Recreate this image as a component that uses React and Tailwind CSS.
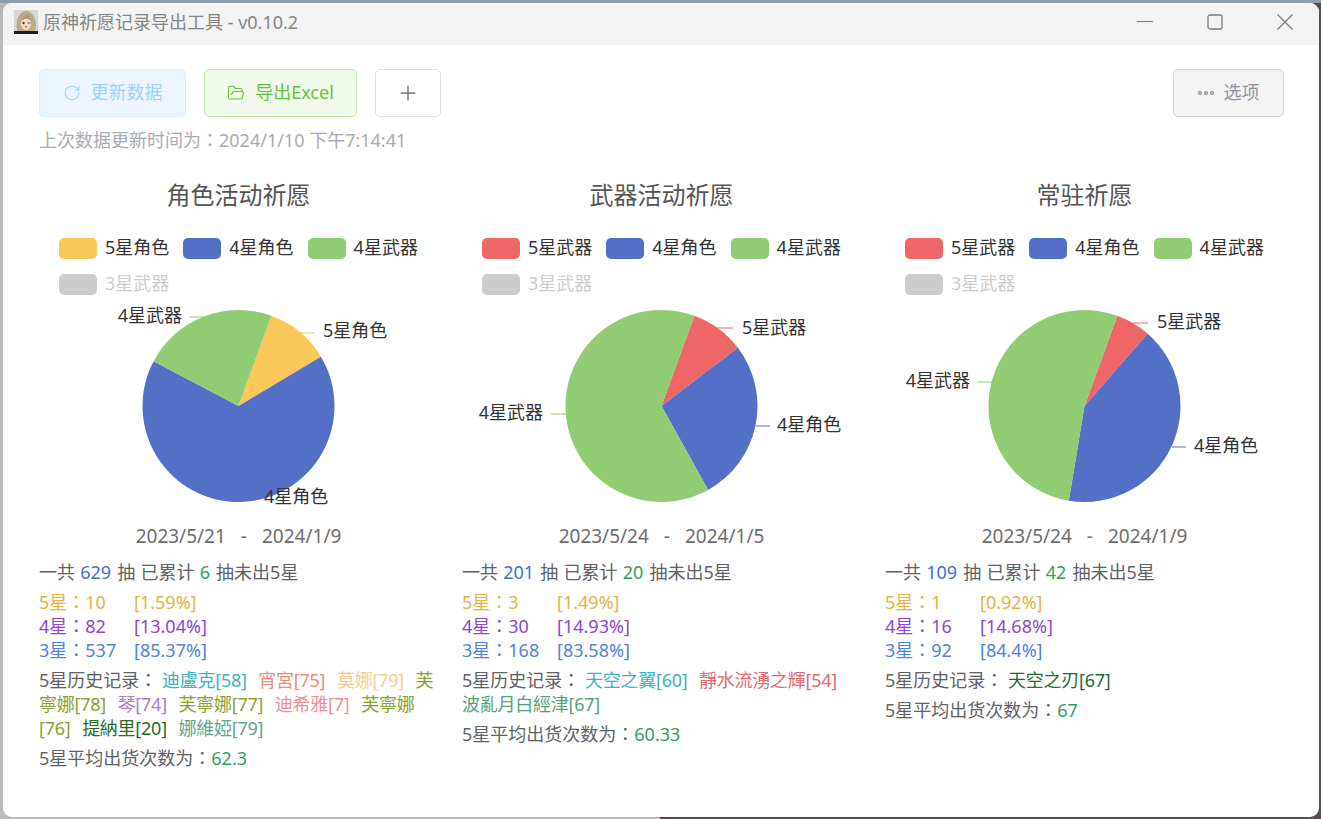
import { Plus, FolderOpen, RotateCw } from "lucide-react";

const YELLOW = "#fac858";
const BLUE = "#5470c6";
const GREEN = "#91cc75";
const RED = "#ee6666";

const charts = [
  {
    title: "角色活动祈愿",
    legend: [["5星角色", YELLOW], ["4星角色", BLUE], ["4星武器", GREEN]],
    slices: [[10, YELLOW], [61, BLUE], [21, GREEN]],
    labels: [
      { text: "5星角色", x: 284, y: 28, line: [[261, 30], [276, 30]], color: YELLOW },
      { text: "4星角色", x: 225, y: 194 },
      { text: "4星武器", x: 143, y: 13, end: true, line: [[150, 14], [167, 14]], color: GREEN },
    ],
    range: ["2023/5/21", "2024/1/9"],
    total: 629,
    pity: 6,
    stars: [["10", "1.59%"], ["82", "13.04%"], ["537", "85.37%"]],
    history: [
      ["迪盧克[58]", "#3fb1c1"], ["宵宮[75]", "#ef8b78"], ["莫娜[79]", "#f3cd8c"], ["芙寧娜[78]", "#8c9f33"],
      ["琴[74]", "#a77fc4"], ["芙寧娜[77]", "#8c9f33"], ["迪希雅[7]", "#ee8f97"], ["芙寧娜[76]", "#8c9f33"],
      ["提納里[20]", "#2d6b1f"], ["娜維婭[79]", "#5fa48e"],
    ],
    avg: "62.3",
  },
  {
    title: "武器活动祈愿",
    legend: [["5星武器", RED], ["4星角色", BLUE], ["4星武器", GREEN]],
    slices: [[3, RED], [9, BLUE], [21, GREEN]],
    labels: [
      { text: "5星武器", x: 280, y: 25, line: [[255, 25], [271, 25]], color: RED },
      { text: "4星角色", x: 315, y: 122, line: [[294, 123], [308, 123]], color: BLUE },
      { text: "4星武器", x: 81, y: 110, end: true, line: [[89, 111], [105, 111]], color: GREEN },
    ],
    range: ["2023/5/24", "2024/1/5"],
    total: 201,
    pity: 20,
    stars: [["3", "1.49%"], ["30", "14.93%"], ["168", "83.58%"]],
    history: [["天空之翼[60]", "#3fb1c1"], ["靜水流湧之輝[54]", "#e26c72"], ["波亂月白經津[67]", "#55a081"]],
    avg: "60.33",
  },
  {
    title: "常驻祈愿",
    legend: [["5星武器", RED], ["4星角色", BLUE], ["4星武器", GREEN]],
    slices: [[1, RED], [7, BLUE], [9, GREEN]],
    labels: [
      { text: "5星武器", x: 272, y: 19, line: [[248, 20], [263, 20]], color: RED },
      { text: "4星角色", x: 309, y: 143, line: [[287, 144], [301, 144]], color: BLUE },
      { text: "4星武器", x: 85, y: 78, end: true, line: [[92, 79], [107, 79]], color: GREEN },
    ],
    range: ["2023/5/24", "2024/1/9"],
    total: 109,
    pity: 42,
    stars: [["1", "0.92%"], ["16", "14.68%"], ["92", "84.4%"]],
    history: [["天空之刃[67]", "#1f6b2e"]],
    avg: "67",
  },
];

const starStyles = ["text-[#e5b344]", "text-[#8d46d4]", "text-[#4f82de]"];
const starNames = ["5星", "4星", "3星"];

// centred full-width colon, the SC face sets it low and to the left
function Colon() {
  return <span className="font-['Noto_Sans_CJK_TC'] leading-none">：</span>;
}

function Pie({ slices, labels }) {
  const cx = 199.5;
  const cy = 103;
  const r = 96;
  const sum = slices.reduce((a, s) => a + s[0], 0);
  let angle = 20;

  const paths = slices.map(([value, color]) => {
    const from = (angle * Math.PI) / 180;
    angle += (value / sum) * 360;
    const to = (angle * Math.PI) / 180;
    const large = to - from > Math.PI ? 1 : 0;
    const d = `M${cx} ${cy}L${cx + r * Math.sin(from)} ${cy - r * Math.cos(from)}A${r} ${r} 0 ${large} 1 ${cx + r * Math.sin(to)} ${cy - r * Math.cos(to)}Z`;
    return <path key={color} d={d} fill={color} />;
  });

  return (
    <svg width="399" height="221" className="block">
      {paths}
      {labels.map((l) => (
        <g key={l.text}>
          {l.line && <line x1={l.line[0][0]} y1={l.line[0][1]} x2={l.line[1][0]} y2={l.line[1][1]} stroke={l.color} />}
          <text x={l.x} y={l.y + 6} fontSize="18" fill="#333" textAnchor={l.end ? "end" : "start"}>
            {l.text}
          </text>
        </g>
      ))}
    </svg>
  );
}

function Chart({ chart }) {
  return (
    <div>
      <div className="h-8 text-center text-2xl leading-8 text-[#555]">{chart.title}</div>
      <div className="mt-[19px] flex h-[73px] flex-wrap content-start gap-x-[14px] pl-5">
        {[...chart.legend, ["3星武器", null]].map(([name, color]) => (
          <div key={name} className={`flex h-9 items-center gap-2 ${color ? "text-[#333]" : "text-[#ccc]"}`}>
            <span
              className={`h-[21px] w-[38px] rounded-[5px] ${color ? "" : "bg-[#ccc]"}`}
              style={color ? { backgroundColor: color } : undefined}
            />
            <span className="pb-[2px]">{name}</span>
          </div>
        ))}
      </div>
      <Pie slices={chart.slices} labels={chart.labels} />
      <div className="h-6 text-center text-[19px] text-[#6e6e6e]">
        {chart.range[0]}
        <span className="mx-[15px]">-</span>
        {chart.range[1]}
      </div>
      <div className="mt-3 text-[#606266] [word-spacing:0.5px]">
        一共 <span className="mr-px text-[#3d6fd6]">{chart.total}</span> 抽 已累计{" "}
        <span className="mr-px text-[#2f9e60]">{chart.pity}</span> 抽未出5星
      </div>
      <div className="mt-[6px]">
        {chart.stars.map(([count, pct], i) => (
          <div key={starNames[i]} className={starStyles[i]}>
            <span className="inline-block w-[95px]">
              {starNames[i]}
              <Colon />
              {count}
            </span>
            [{pct}]
          </div>
        ))}
      </div>
      <div className="mt-[6px] text-[#606266]">
        5星历史记录
        <Colon />{" "}
        {chart.history.map(([name, color]) => (
          <span key={name}>
            <span className="mr-[7px] tracking-[-0.25px]" style={{ color }}>
              {name}
            </span>{" "}
          </span>
        ))}
      </div>
      <div className="mt-[6px] text-[#606266]">
        5星平均出货次数为
        <Colon />
        <span className="text-[#2f9e60]">{chart.avg}</span>
      </div>
    </div>
  );
}

function Avatar() {
  return (
    <svg width="24" height="24" viewBox="0 0 24 24" className="shrink-0">
      <rect width="24" height="24" fill="#d9d6d0" />
      <path d="M3 21C1 11 5 1 12 1s12 10 9 20z" fill="#b9ab8b" />
      <path d="M7 11c2-3 8-3 10 0 1 5-2 9-5 9s-6-4-5-9z" fill="#f3dcc8" />
      <path d="M6 11l8-7 4 7-5-3z" fill="#a8976f" />
      <circle cx="9.5" cy="13" r="1.2" fill="#5a4a3a" />
      <path d="M13.5 13h3" stroke="#5a4a3a" />
      <path d="M10.5 16h3l-1.5 2z" fill="#b5564f" />
      <rect y="21" width="24" height="3" fill="#1d1b26" />
    </svg>
  );
}

export default function App() {
  return (
    <div className="h-screen overflow-hidden bg-[linear-gradient(180deg,#8f9ea8_3px,transparent_3px),linear-gradient(90deg,#b9b9b9_50%,#5a4b4d_50%)] pt-[3px] pr-[2px] pb-[2px] pl-[3px] font-['Noto_Sans','Noto_Sans_CJK_SC',sans-serif] text-[18px] leading-6">
      <div className="flex h-full flex-col overflow-hidden rounded-[9px] bg-white">
        <div className="flex h-[42px] shrink-0 items-center bg-[#f3f3f3] pb-1 pl-[11px]">
          <Avatar />
          <span className="ml-[5px] text-[#858585]">原神祈愿记录导出工具 - v0.10.2</span>
          <div className="ml-auto flex items-center gap-[54px] pr-[26px] text-[#7a7a7a]">
            <svg width="16" height="16" viewBox="0 0 16 16" fill="none" stroke="currentColor">
              <path d="M0 7.5h16" />
            </svg>
            <svg width="16" height="16" viewBox="0 0 16 16" fill="none" stroke="currentColor" strokeWidth="1.3">
              <rect x="1" y="1" width="14" height="14" rx="2" />
            </svg>
            <svg width="16" height="16" viewBox="0 0 16 16" fill="none" stroke="currentColor" strokeWidth="1.2">
              <path d="M.5.5l15 15M15.5.5l-15 15" />
            </svg>
          </div>
        </div>

        <div className="flex-1 pt-6 pr-[35px] pl-9">
          <div className="flex gap-[18px]">
            <button className="flex h-12 w-[147px] items-center justify-center gap-[10px] rounded-[5px] border border-[#d9ecff] bg-[#ecf5ff] text-[#a0cfff]">
              <RotateCw size={18} strokeWidth={1.5} />
              <span className="pb-[2px]">更新数据</span>
            </button>
            <button className="flex h-12 w-[153px] items-center justify-center gap-[10px] rounded-[5px] border border-[#c2e7b0] bg-[#f0f9eb] text-[#67c23a]">
              <FolderOpen size={18} strokeWidth={1.5} />
              <span className="pb-[2px]">导出Excel</span>
            </button>
            <button className="flex h-12 w-[66px] items-center justify-center rounded-[5px] border border-[#dcdfe6] text-[#606266]">
              <Plus size={24} strokeWidth={1.25} />
            </button>
            <button className="ml-auto flex h-12 w-[111px] items-center justify-center gap-[10px] rounded-[5px] border border-[#d3d4d6] bg-[#f4f4f5] text-[#909399]">
              <svg width="16" height="16" viewBox="0 0 16 16" fill="none" stroke="currentColor" strokeWidth="1.3">
                <circle cx="2" cy="8" r="1.4" />
                <circle cx="8" cy="8" r="1.4" />
                <circle cx="14" cy="8" r="1.4" />
              </svg>
              <span className="pb-[2px]">选项</span>
            </button>
          </div>
          <div className="mt-[11px] text-[#a8abb2]">
            上次数据更新时间为
            <Colon />
            2024/1/10 下午7:14:41
          </div>

          <div className="mt-[27px] grid grid-cols-3 gap-6">
            {charts.map((chart) => (
              <Chart key={chart.title} chart={chart} />
            ))}
          </div>
        </div>
      </div>
    </div>
  );
}
